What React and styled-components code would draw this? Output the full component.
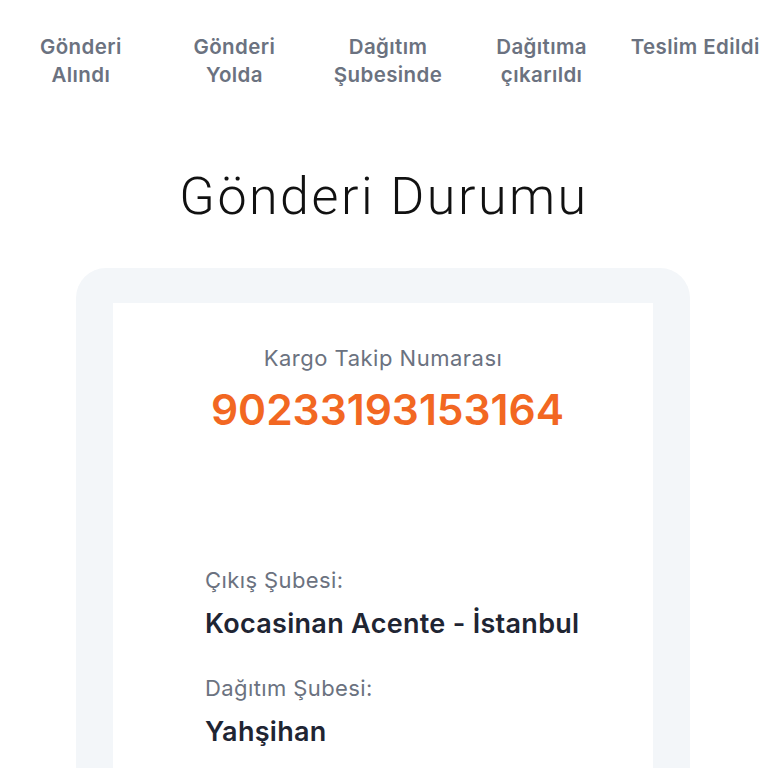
import React from "react";
import styled, { createGlobalStyle } from "styled-components";

const GlobalStyle = createGlobalStyle`
  * { box-sizing: border-box; }
  body {
    margin: 0;
    background: #ffffff;
    font-family: "Inter", "Noto Sans", sans-serif;
  }
`;

const Page = styled.div`
  width: 768px;
  height: 768px;
  overflow: hidden;
`;

const Steps = styled.nav`
  display: grid;
  grid-template-columns: repeat(5, 1fr);
  padding: 33px 0 0 4px;
  margin-right: -4px;
`;

const Step = styled.div`
  text-align: center;
  font-size: 20.5px;
  letter-spacing: 0.4px;
  line-height: 28px;
  font-weight: 600;
  color: #6b7280;
  white-space: nowrap;
`;

const Title = styled.h1`
  margin: 79px 0 0;
  text-align: center;
  font-family: "Roboto", sans-serif;
  font-weight: 300;
  font-size: 52px;
  letter-spacing: 2.5px;
  line-height: 58px;
  color: #111111;
`;

const Card = styled.section`
  margin: 42px 78px 0 76px;
  padding: 35px 37px 0;
  background: #f3f6f9;
  border-radius: 30px 30px 0 0;
`;

const Inner = styled.div`
  background: #ffffff;
  padding: 41px 0 40px;
  min-height: 520px;
`;

const TrackLabel = styled.div`
  text-align: center;
  font-size: 22px;
  letter-spacing: 0.5px;
  line-height: 28px;
  font-weight: 400;
  color: #6b7280;
`;

const TrackNumber = styled.div`
  margin-top: 14px;
  padding-left: 9px;
  text-align: center;
  font-size: 42.5px;
  line-height: 48px;
  font-weight: 600;
  color: #f26722;
`;

const Details = styled.div`
  margin-top: 132px;
  padding-left: 92px;
`;

const Field = styled.div`
  & + & {
    margin-top: 34px;
  }
`;

const FieldLabel = styled.div`
  font-size: 22px;
  letter-spacing: 0.4px;
  line-height: 28px;
  color: #6b7280;
`;

const FieldValue = styled.div`
  margin-top: 14px;
  font-size: 27px;
  letter-spacing: 0.3px;
  line-height: 32px;
  font-weight: 600;
  color: #1f2533;
`;

const steps = [
  ["Gönderi", "Alındı"],
  ["Gönderi", "Yolda"],
  ["Dağıtım", "Şubesinde"],
  ["Dağıtıma", "çıkarıldı"],
  ["Teslim Edildi"],
];

export default function App() {
  return (
    <Page>
      <GlobalStyle />
      <Steps>
        {steps.map((lines, i) => (
          <Step key={i}>
            {lines.map((l, j) => (
              <div key={j}>{l}</div>
            ))}
          </Step>
        ))}
      </Steps>
      <Title>Gönderi Durumu</Title>
      <Card>
        <Inner>
          <TrackLabel>Kargo Takip Numarası</TrackLabel>
          <TrackNumber>90233193153164</TrackNumber>
          <Details>
            <Field>
              <FieldLabel>Çıkış Şubesi:</FieldLabel>
              <FieldValue>Kocasinan Acente - İstanbul</FieldValue>
            </Field>
            <Field>
              <FieldLabel>Dağıtım Şubesi:</FieldLabel>
              <FieldValue>Yahşihan</FieldValue>
            </Field>
          </Details>
        </Inner>
      </Card>
    </Page>
  );
}
